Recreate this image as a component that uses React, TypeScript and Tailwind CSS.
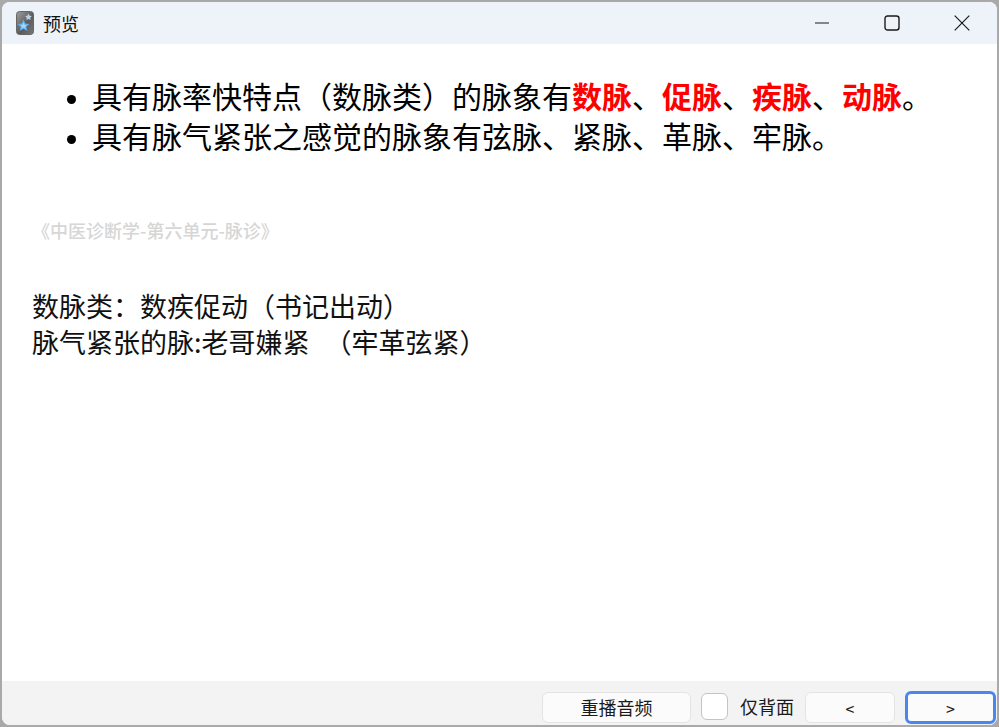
import React from 'react';

const cjk = "font-['Noto_Sans_CJK_SC','Noto_Sans',sans-serif]";

const AppIcon = () => (
  <svg width="18" height="24" viewBox="0 0 18 24" className="shrink-0">
    <defs>
      <linearGradient id="ic" x1="0" y1="0" x2="1" y2="1">
        <stop offset="0" stopColor="#a0a0a0" />
        <stop offset="0.55" stopColor="#5c5c5c" />
        <stop offset="1" stopColor="#777" />
      </linearGradient>
    </defs>
    <rect x="0.5" y="0.5" width="17" height="23" rx="3" fill="url(#ic)" stroke="#666" />
    <path d="M12.5 2.5l1.1 2.3 2.4.3-1.8 1.6.5 2.4-2.2-1.2-2.2 1.2.5-2.4L9 5.1l2.4-.3z" fill="#b9cfe6" />
    <path d="M7.5 8.5l1.8 3.9 4.2.5-3.1 2.8.9 4.3-3.8-2.2-3.8 2.2.9-4.3-3.1-2.8 4.2-.5z" fill="#62b0ee" />
    <path d="M7.5 11.5l1 2.2 2.3.3-1.7 1.5.5 2.3-2.1-1.2-2.1 1.2.5-2.3L4.2 14l2.3-.3z" fill="#a9d6f6" />
  </svg>
);

const FooterButton = ({ children, focused, className }: { children: React.ReactNode; focused?: boolean; className: string }) => (
  <button
    className={`${className} rounded-[6px] bg-[#fbfbfb] text-[#1a1a1a] flex items-center justify-center ${
      focused ? 'h-[33px] -mt-[1px] border-[3px] border-[#4a86f0]' : 'h-[31px] border-[1.5px] border-[#e4e4e4]'
    }`}
  >
    {children}
  </button>
);

const App: React.FC = () => {
  return (
    <div className={`w-[999px] h-[727px] bg-[#a9a9a9] p-[2px] overflow-hidden ${cjk}`}>
      <div className="w-[995px] h-[723px] rounded-[8px] overflow-hidden flex flex-col bg-white">
        {/* Title bar */}
        <div className="h-[42px] bg-[#eef3f9] flex items-center shrink-0">
          <div className="ml-[14px]">
            <AppIcon />
          </div>
          <span className="ml-[9px] text-[18px] leading-none text-[#111]">预览</span>
          <div className="ml-auto flex items-center">
            <div className="w-[71px] flex justify-center pl-[3px]">
              <svg width="16" height="16" viewBox="0 0 16 16">
                <path d="M1 8h14" stroke="#1a1a1a" strokeWidth="1" />
              </svg>
            </div>
            <div className="w-[71px] flex justify-center pl-[1px]">
              <svg width="16" height="16" viewBox="0 0 16 16">
                <rect x="1" y="1" width="14" height="14" rx="2.5" fill="none" stroke="#1a1a1a" strokeWidth="1.4" />
              </svg>
            </div>
            <div className="w-[70px] flex justify-center">
              <svg width="16" height="16" viewBox="0 0 16 16">
                <path d="M.7.7l14.6 14.6M15.3.7L.7 15.3" stroke="#1a1a1a" strokeWidth="1.2" />
              </svg>
            </div>
          </div>
        </div>

        {/* Card content */}
        <div className="flex-1 pt-[31px] pl-[30px]">
          <ul className="list-disc pl-[60px] text-[30px] leading-[40px] text-black marker:text-[24px]">
            <li>
              具有脉率快特点（数脉类）的脉象有
              <b className="text-[#ff0000]">数脉</b>、<b className="text-[#ff0000]">促脉</b>、
              <b className="text-[#ff0000]">疾脉</b>、<b className="text-[#ff0000]">动脉</b>。
            </li>
            <li>具有脉气紧张之感觉的脉象有弦脉、紧脉、革脉、牢脉。</li>
          </ul>
          <p className="mt-[62px] text-[18px] leading-[26px] font-medium text-[#d6d6d6]">《中医诊断学-第六单元-脉诊》</p>
          <div className="mt-[45px] text-[27px] leading-[36px] text-[#111]">
            <p>数脉类：数疾促动（书记出动）</p>
            <p>
              脉气紧张的脉:老哥嫌紧 &nbsp;<span className="ml-[3px]">（牢革弦紧）</span>
            </p>
          </div>
        </div>

        {/* Footer */}
        <div className="h-[44px] bg-[#f3f3f3] flex items-start justify-end pt-[11px] pr-[1px] shrink-0">
          <FooterButton className="w-[149px] text-[18px]">重播音频</FooterButton>
          <div className="ml-[10px] w-[27px] h-[27px] mt-[1px] rounded-[6px] border-[1.5px] border-[#c4c4c4] bg-white" />
          <span className="ml-[12px] mr-[11px] text-[18px] leading-[28px] text-[#1a1a1a]">仅背面</span>
          <FooterButton className="w-[90px] text-[16px]">&lt;</FooterButton>
          <FooterButton focused className="ml-[10px] w-[91px] text-[16px]">&gt;</FooterButton>
        </div>
      </div>
    </div>
  );
};

export default App;
